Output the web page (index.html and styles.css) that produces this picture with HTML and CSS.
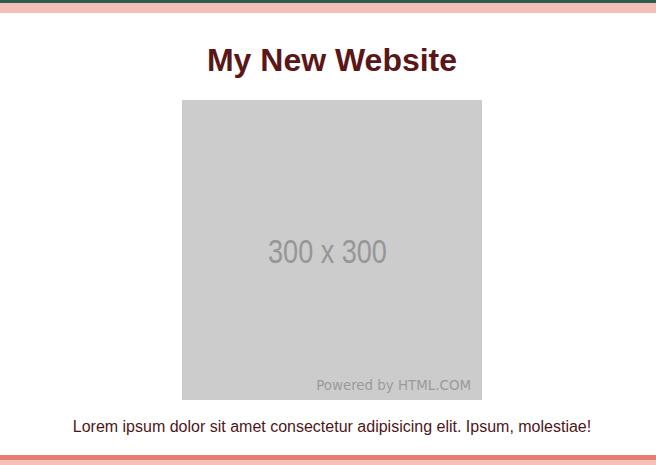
FILE: index.html
```html
<!DOCTYPE html>
<html>
<head>
<meta charset="utf-8">
<link rel="stylesheet" href="styles.css">
</head>
<body>
<div class="top-bar"></div>
<main class="content">
  <h1 class="title">My New Website</h1>
  <div class="placeholder">
    <span class="ph-size">300 x 300</span>
    <span class="ph-credit">Powered by HTML.COM</span>
  </div>
  <p class="lead">Lorem ipsum dolor sit amet consectetur adipisicing elit. Ipsum, molestiae!</p>
</main>
<div class="bottom-bar"></div>
</body>
</html>
```
FILE: styles.css
```css
html, body {
  margin: 0;
  padding: 0;
  background: #ffffff;
}
body {
  font-family: "Liberation Sans", Arial, sans-serif;
}
.top-bar {
  border-top: 3px solid #2d5c4b;
  height: 10px;
  background: #f2c0b9;
}
.content {
  padding: 0 0 0 8px;
  display: flex;
  flex-direction: column;
  align-items: center;
}
.title {
  font-size: 32px;
  font-weight: bold;
  color: #5b1718;
  margin: 29px 0 21px;
  line-height: 37px;
}
.placeholder {
  width: 300px;
  height: 300px;
  background: #cccccc;
  position: relative;
  display: flex;
  align-items: center;
  justify-content: center;
}
.ph-size {
  font-family: "Liberation Sans", Arial, sans-serif;
  font-size: 33px;
  color: #969696;
  transform: scaleX(0.82);
  margin: 3px 0 0 -10px;
  white-space: nowrap;
}
.ph-credit {
  position: absolute;
  right: 11px;
  bottom: 7px;
  font-family: "DejaVu Sans", sans-serif;
  font-size: 13.4px;
  color: #9a9a9a;
}
.lead {
  font-size: 16px;
  color: #4f1618;
  margin: 18px 0 19px;
  line-height: 18px;
}
.bottom-bar {
  border-top: 5px solid #e67d6f;
  height: 10px;
  background: #f2c0b9;
}
```
